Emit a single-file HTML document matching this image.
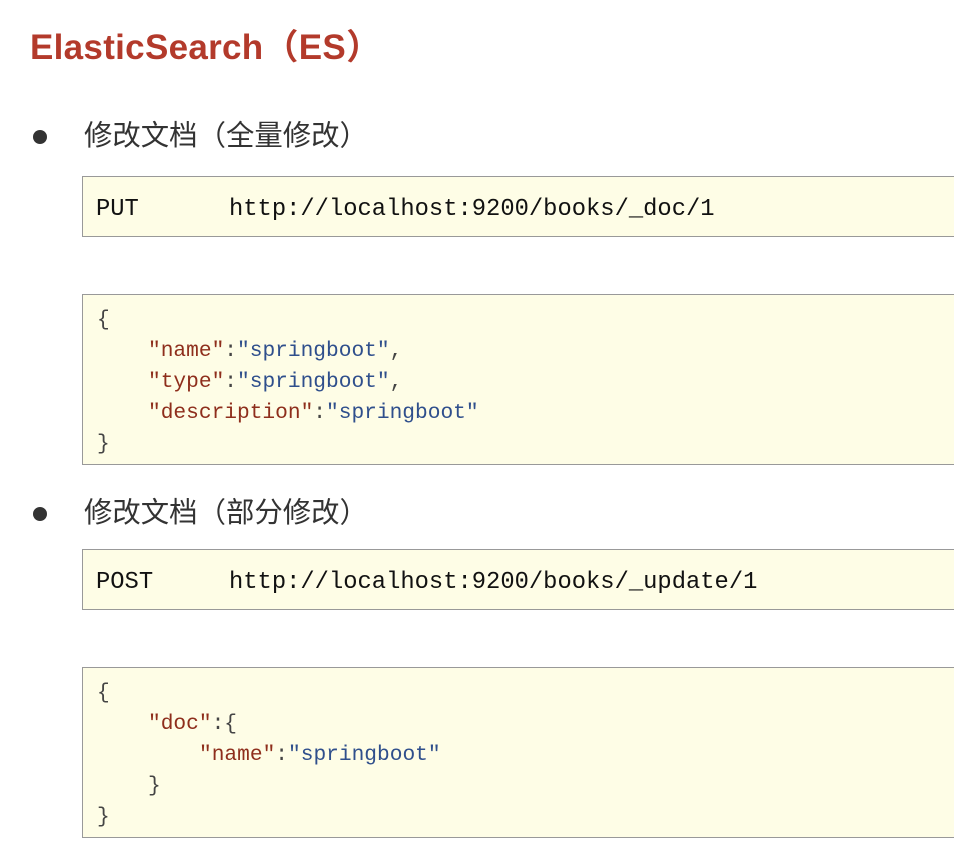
<!DOCTYPE html>
<html><head><meta charset="utf-8"><style>
body{margin:0;width:954px;height:842px;background:#fff;position:relative;overflow:hidden;font-family:"Liberation Sans","Noto Sans CJK SC",sans-serif}
.t{position:absolute;left:30px;top:19px;font-size:35px;font-weight:bold;color:#b33a2b;letter-spacing:0.3px}
.b{position:absolute;left:84px;font-size:28.4px;color:#333;font-family:"Noto Sans CJK SC",sans-serif;line-height:1}
.dot{position:absolute;left:33px;width:14px;height:14px;border-radius:50%;background:#333}
.box{position:absolute;left:82px;width:880px;background:#fefde6;border:1px solid #999;box-sizing:border-box}
.u{font-family:"Liberation Mono",monospace;font-size:23.8px;color:#111;position:absolute;top:19px;white-space:pre}
.j{font-family:"Liberation Mono",monospace;font-size:21.2px;line-height:31px;color:#444;position:absolute;left:14px;top:10px;white-space:pre}
.k{color:#8e2e1c}.v{color:#2f4f8c}
.i1{padding-left:51px}.i2{padding-left:102px}
</style></head><body>
<div class="t">ElasticSearch（ES）</div>
<div class="dot" style="top:130px"></div>
<div class="b" style="top:120px">修改文档（全量修改）</div>
<div class="box" style="top:176px;height:61px"><div class="u" style="left:13px">PUT</div><div class="u" style="left:146px">http://localhost:9200/books/_doc/1</div></div>
<div class="box" style="top:294px;height:171px"><div class="j">{
<span class="i1"><span class="k">"name"</span>:<span class="v">"springboot"</span>,</span>
<span class="i1"><span class="k">"type"</span>:<span class="v">"springboot"</span>,</span>
<span class="i1"><span class="k">"description"</span>:<span class="v">"springboot"</span></span>
}</div></div>
<div class="dot" style="top:507px"></div>
<div class="b" style="top:497px">修改文档（部分修改）</div>
<div class="box" style="top:549px;height:61px"><div class="u" style="left:13px">POST</div><div class="u" style="left:146px">http://localhost:9200/books/_update/1</div></div>
<div class="box" style="top:667px;height:171px"><div class="j">{
<span class="i1"><span class="k">"doc"</span>:{</span>
<span class="i2"><span class="k">"name"</span>:<span class="v">"springboot"</span></span>
<span class="i1">}</span>
}</div></div>
</body></html>
